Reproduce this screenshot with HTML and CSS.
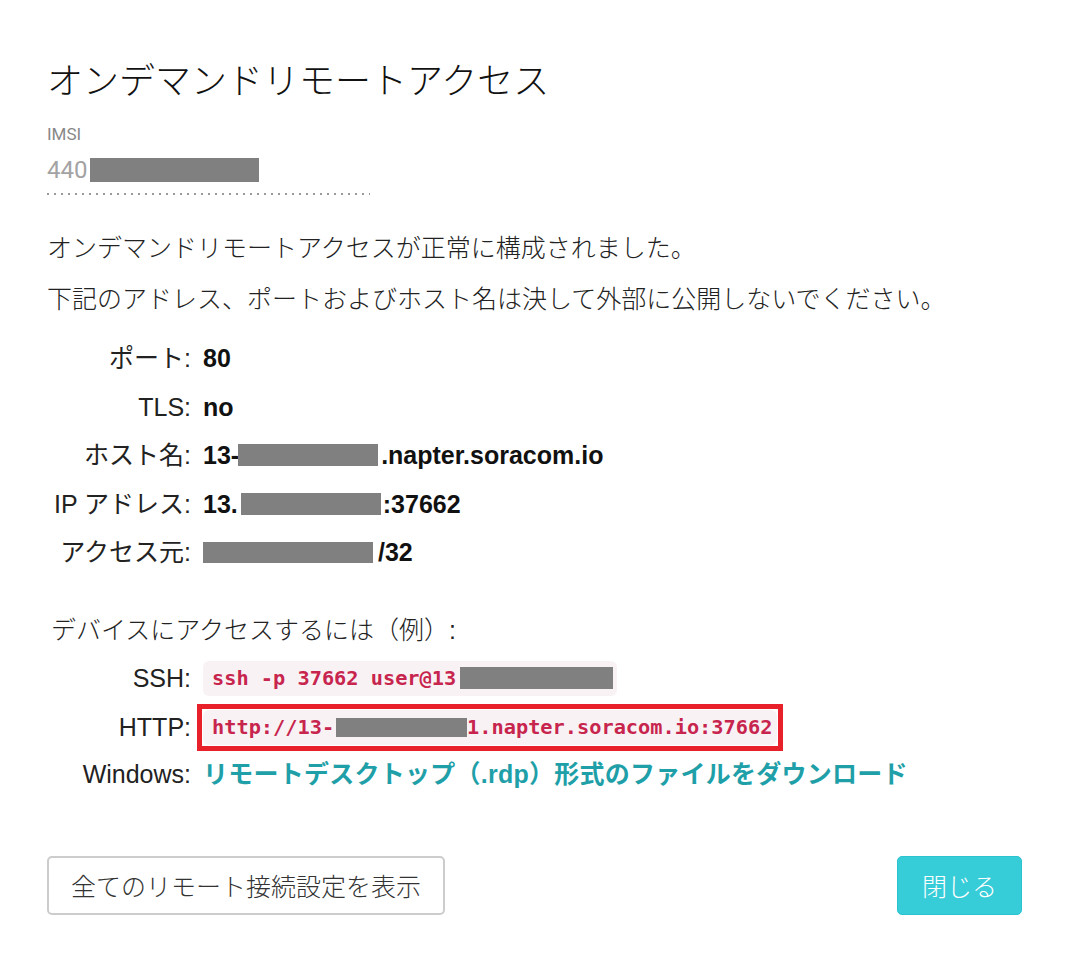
FILE: index.html
```html
<!DOCTYPE html>
<html lang="ja">
<head>
<meta charset="utf-8">
<title>オンデマンドリモートアクセス</title>
<link rel="stylesheet" href="styles.css">
</head>
<body>
<div class="dialog">
  <h1 class="title">オンデマンドリモートアクセス</h1>

  <div class="field">
    <div class="field-label">IMSI</div>
    <div class="field-value">440<span class="redact r-imsi"></span></div>
  </div>

  <p class="msg msg-first">オンデマンドリモートアクセスが正常に構成されました。</p>
  <p class="msg msg-second">下記のアドレス、ポートおよびホスト名は決して外部に公開しないでください。</p>

  <dl class="info">
    <dt>ポート:</dt><dd>80</dd>
    <dt>TLS:</dt><dd>no</dd>
    <dt>ホスト名:</dt><dd>13-<span class="redact r-host"></span><span class="after-host">.napter.soracom.io</span></dd>
    <dt>IP アドレス:</dt><dd>13.<span class="redact r-ip"></span><span class="after-ip">:37662</span></dd>
    <dt>アクセス元:</dt><dd><span class="redact r-src"></span><span class="after-src">/32</span></dd>
  </dl>

  <div class="subhead">デバイスにアクセスするには（例）:</div>

  <dl class="access">
    <dt>SSH:</dt>
    <dd><code class="code code-ssh">ssh -p 37662 user@13<span class="redact r-ssh"></span></code></dd>
    <dt>HTTP:</dt>
    <dd><span class="highlight"><code class="code code-http">http://13-<span class="redact r-http"></span>1.napter.soracom.io:37662</code></span></dd>
    <dt>Windows:</dt>
    <dd><a class="rdp-link" href="#">リモートデスクトップ（.rdp）形式のファイルをダウンロード</a></dd>
  </dl>

  <div class="actions">
    <button class="btn btn-default" type="button">全てのリモート接続設定を表示</button>
    <button class="btn btn-primary" type="button">閉じる</button>
  </div>
</div>
</body>
</html>
```

FILE: styles.css
```css
html, body {
  margin: 0;
  padding: 0;
  background: #ffffff;
}

body {
  font-family: "Liberation Sans", "Noto Sans CJK JP", sans-serif;
  color: #222222;
}

.dialog {
  padding: 54px 44px 40px 47px;
}

.title {
  margin: 0;
  font-family: "Noto Sans CJK JP", sans-serif;
  font-size: 36px;
  line-height: 48px;
  font-weight: 300;
  color: #111111;
}

.field {
  margin-top: 22px;
  width: 323px;
  padding-bottom: 10px;
  background-image: linear-gradient(to right, #9a9a9a 0 2px, transparent 2px 7px);
  background-size: 7px 2px;
  background-repeat: repeat-x;
  background-position: left bottom;
}

.field-label {
  font-family: Roboto, "Liberation Sans", sans-serif;
  font-size: 17px;
  line-height: 20px;
  color: #888888;
}

.field-value {
  margin-top: 11px;
  display: flex;
  align-items: center;
  font-family: Roboto, "Liberation Sans", sans-serif;
  font-weight: 400;
  font-size: 24px;
  line-height: 30px;
  color: #a3a3a3;
}

.redact {
  display: inline-block;
  background: #808080;
  flex: none;
}

.r-imsi { width: 169px; height: 24px; margin-left: 3px; }

.msg {
  margin: 0;
  font-family: "Noto Sans CJK JP", sans-serif;
  font-weight: 300;
  font-size: 25px;
  line-height: 30px;
  color: #222222;
}

.msg-first { margin-top: 36px; }
.msg-second { margin-top: 21px; }

.info,
.access {
  display: grid;
  grid-template-columns: 144px auto;
  column-gap: 12px;
  align-items: center;
  margin: 0;
  font-size: 25px;
  line-height: 30px;
}

.info {
  margin-top: 22px;
  grid-auto-rows: 48.5px;
}

.info dt,
.access dt {
  text-align: right;
  color: #222222;
  white-space: nowrap;
}

.info dd,
.access dd {
  margin: 0;
  display: flex;
  align-items: center;
  white-space: nowrap;
}

.info dd {
  font-weight: bold;
  color: #111111;
}

.r-host { width: 140px; height: 22px; margin-left: -1px; }
.after-host { margin-left: 3px; }
.r-ip { width: 140px; height: 22px; margin-left: 3px; }
.after-ip { margin-left: 2px; }
.r-src { width: 170px; height: 21px; }
.after-src { margin-left: 5px; }

.subhead {
  margin-top: 38px;
  padding-left: 4px;
  font-family: "Liberation Sans", "Noto Sans CJK JP", sans-serif;
  font-weight: 300;
  font-size: 25px;
  line-height: 30px;
  color: #222222;
}

.access {
  margin-top: 16px;
  row-gap: 14px;
}

.code {
  display: inline-flex;
  align-items: center;
  height: 35px;
  font-family: "DejaVu Sans Mono", "Liberation Mono", monospace;
  font-weight: bold;
  font-size: 20.3px;
  line-height: 35px;
  color: #c7254e;
  background: #f9f2f4;
  border-radius: 6px;
  padding: 0 4px 0 9px;
}

.code-http {
  padding-right: 5px;
}

.r-ssh { width: 153px; height: 22px; margin-left: 4px; }
.r-http { width: 131px; height: 19px; margin-left: 2px; }

.highlight {
  display: inline-block;
  border: 5px solid #e8202a;
  padding: 1px;
  margin: -6px;
}

.highlight .code {
  vertical-align: top;
}

.rdp-link {
  color: #1fa0a8;
  font-weight: bold;
  letter-spacing: 0.25px;
  text-decoration: none;
}

.actions {
  display: flex;
  justify-content: space-between;
  align-items: center;
  margin-top: 67px;
}

.btn {
  height: 59px;
  font-family: "Noto Sans CJK JP", sans-serif;
  font-weight: 300;
  font-size: 25px;
  line-height: 30px;
  border-radius: 5px;
  padding: 0;
  cursor: pointer;
}

.btn-default {
  width: 398px;
  background: #ffffff;
  border: 2px solid #cccccc;
  color: #333333;
}

.btn-primary {
  width: 125px;
  background: #36ccd8;
  border: 1px solid #2cc2ce;
  color: #ffffff;
}
```
